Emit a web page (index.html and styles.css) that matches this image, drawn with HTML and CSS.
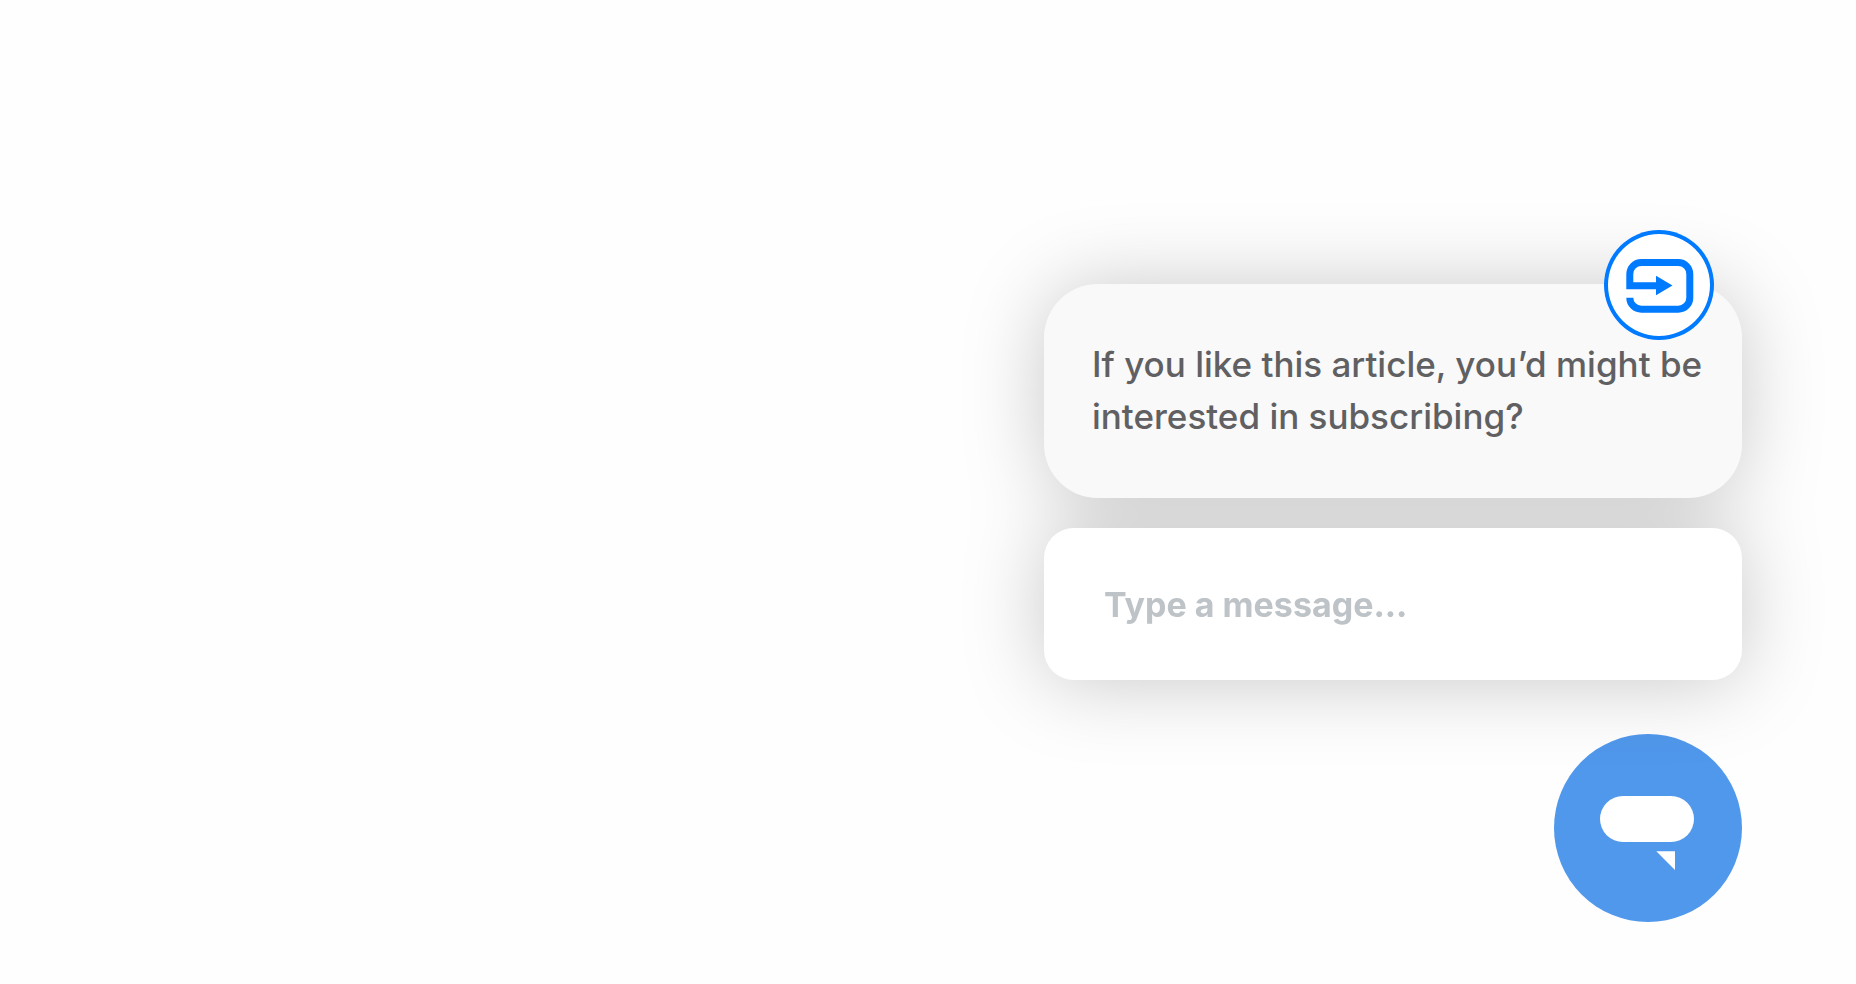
FILE: index.html
```html
<!DOCTYPE html>
<html lang="en">

<head>
    <meta charset="UTF-8">
    <meta name="viewport" content="width=device-width, initial-scale=1.0">
    <title>Chat Widget</title>
    <link rel="stylesheet" href="styles.css">
</head>

<body>
    <div class="widget">
        <!-- Message and reply box -->
        <div class="conversation">
            <div class="cards">
                <div class="bubble">
                    <p>If you like this article, you’d might be interested in subscribing?</p>
                </div>
                <form class="reply">
                    <input type="text" id="message" placeholder="Type a message..." aria-label="Type a message">
                </form>
            </div>
            <div class="avatar">
                <svg viewBox="0 0 110 110" aria-hidden="true">
                    <path class="avatar-line" d="M54 55.7H25.8V44a11.5 11.5 0 0 1 11.5-11.5h37a11.5 11.5 0 0 1 11.5 11.5v23.7a11.5 11.5 0 0 1-11.5 11.5h-37a11.5 11.5 0 0 1-11.5-11.5" />
                    <path class="avatar-arrow" d="M52 45.7l16.5 9.8L52 65.3z" />
                </svg>
            </div>
        </div>

        <!-- Launcher -->
        <button type="button" class="launcher" aria-label="Chat">
            <svg viewBox="0 0 188 188" aria-hidden="true">
                <rect x="46" y="62" width="94" height="46" rx="23" />
                <path d="M102.3 117.3H121V136z" />
            </svg>
        </button>
    </div>
</body>

</html>
```

FILE: styles.css
```css
* {
    box-sizing: border-box;
}

body {
    margin: 0;
    min-height: 100vh;
    display: flex;
    justify-content: flex-end;
    align-items: flex-end;
    padding: 62px 114px;
    background-color: #fefefe;
    font-family: Inter, sans-serif;
}

.widget {
    display: flex;
    flex-direction: column;
    align-items: flex-end;
    gap: 54px;
    width: 100%;
    max-width: 698px;
}

.conversation {
    position: relative;
    z-index: 1;
    width: 100%;
}

.cards {
    display: flex;
    flex-direction: column;
    gap: 30px;
    filter: drop-shadow(0 2px 40px rgba(0, 0, 0, 0.21));
}

.bubble {
    padding: 54px 36px 56px 48px;
    border-radius: 54px;
    background: #f9f9f9;
}

.bubble p {
    margin: 0;
    color: #606063;
    font-size: 35px;
    font-weight: 500;
    line-height: 52px;
}

/* Badge on the top edge of the bubble */
.avatar {
    position: absolute;
    top: -54px;
    right: 28px;
    width: 110px;
    height: 110px;
    border-radius: 50%;
    background: white;
    box-shadow: inset 0 0 0 4px #007aff;
}

.avatar svg,
.launcher svg {
    display: block;
    width: 100%;
    height: 100%;
}

.avatar-line {
    fill: none;
    stroke: #007aff;
    stroke-width: 7;
}

.avatar-arrow {
    fill: #007aff;
}

.reply input {
    display: block;
    width: 100%;
    height: 152px;
    padding: 0 60px;
    border: none;
    border-radius: 30px;
    outline: none;
    background: white;
    color: #606063;
    font-family: inherit;
    font-size: 34px;
    font-weight: 700;
}

.reply input::placeholder {
    color: #bdc3c7;
    opacity: 1;
}

.launcher {
    width: 188px;
    height: 188px;
    padding: 0;
    border: none;
    border-radius: 50%;
    background: #5098ec;
    cursor: pointer;
}

.launcher svg {
    fill: white;
}
```
